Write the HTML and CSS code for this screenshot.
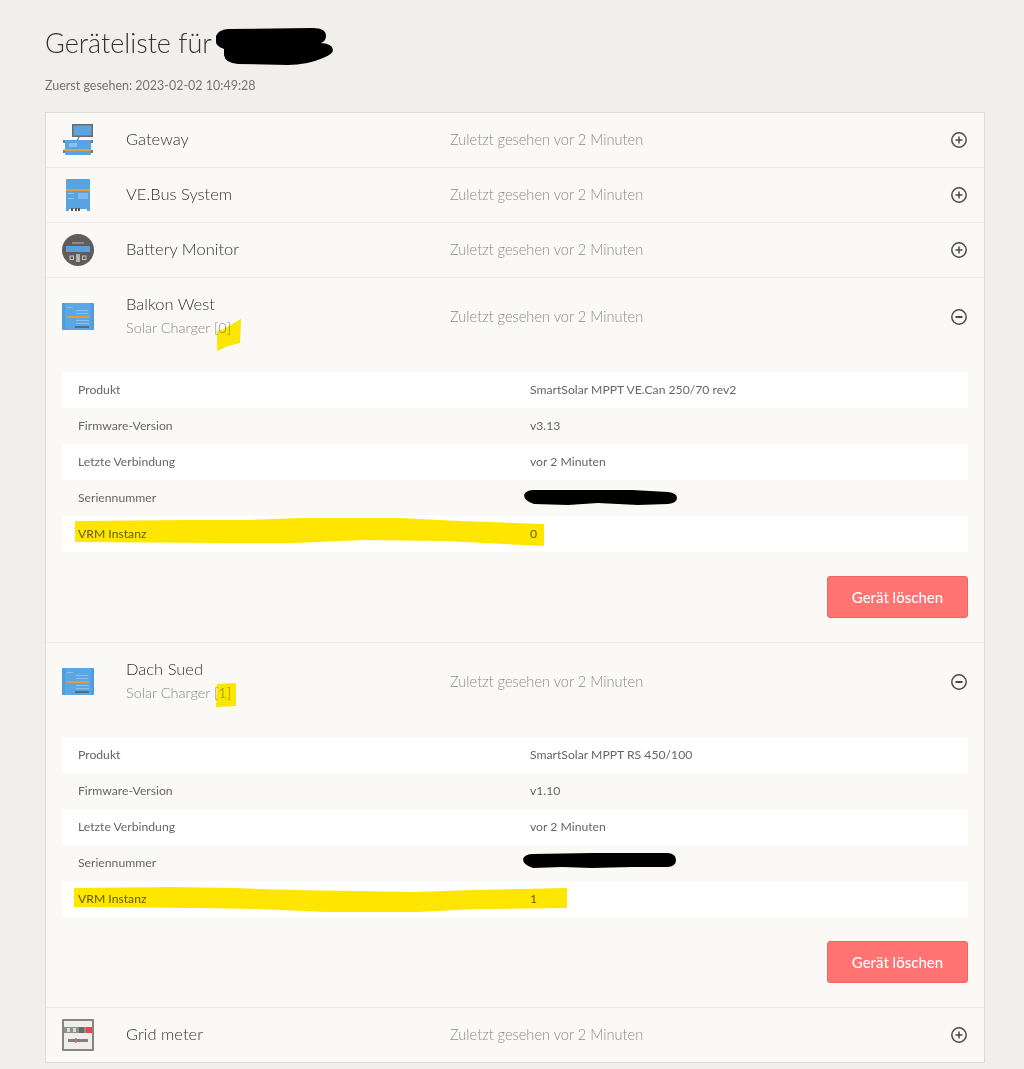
FILE: index.html
```html
<!DOCTYPE html>
<html lang="de">
<head>
    <meta charset="UTF-8">
    <title>Geräteliste</title>
    <link rel="stylesheet" href="styles.css">
</head>
<body>
<div class="page">
    <h1 class="title">Geräteliste für</h1>
    <p class="seen">Zuerst gesehen: 2023-02-02 10:49:28</p>

    <div class="panel">
        <div class="device">
            <div class="head">
                <svg class="icon" viewBox="0 0 32 32">
                    <rect x="10" y="0" width="21" height="13" fill="#6b6b6b"/>
                    <rect x="11.500" y="1.500" width="18" height="10" fill="#5aa5e0"/>
                    <path d="M17 13l-2 4" stroke="#888" stroke-width="1.500"/>
                    <rect x="1" y="16" width="30" height="3" fill="#777"/>
                    <rect x="1" y="26" width="30" height="3" fill="#777"/>
                    <rect x="3" y="16" width="26" height="15" rx="1" fill="#58a3e2"/>
                    <rect x="7" y="19" width="8" height="4" fill="#8cc0ea"/>
                    <rect x="3" y="25" width="26" height="2" fill="#e0a040"/>
                </svg>
                <div class="name">Gateway</div>
                <div class="status">Zuletzt gesehen vor 2 Minuten</div>
                <svg class="toggle" viewBox="0 0 16 16"><circle cx="8" cy="8" r="7.200"/><path d="M4.500 8h7M8 4.500v7"/></svg>
            </div>
        </div>
        <div class="device">
            <div class="head">
                <svg class="icon" viewBox="0 0 32 32">
                    <path d="M4 1q0-1 1-1h22q1 0 1 1v31h-3v-2h-18v2h-3z" fill="#58a3e2"/>
                    <rect x="4" y="10" width="24" height="2" fill="#ea9a35"/>
                    <rect x="16" y="14" width="10" height="6" fill="#83b9e8"/>
                    <rect x="6" y="14" width="6" height="1" fill="#9cc8ec"/>
                    <rect x="6" y="19" width="6" height="1" fill="#9cc8ec"/>
                    <rect x="9" y="29" width="2" height="3" fill="#555"/>
                    <rect x="13" y="29" width="2" height="3" fill="#555"/>
                    <rect x="16" y="29" width="2" height="3" fill="#555"/>
                </svg>
                <div class="name">VE.Bus System</div>
                <div class="status">Zuletzt gesehen vor 2 Minuten</div>
                <svg class="toggle" viewBox="0 0 16 16"><circle cx="8" cy="8" r="7.200"/><path d="M4.500 8h7M8 4.500v7"/></svg>
            </div>
        </div>
        <div class="device">
            <div class="head">
                <svg class="icon" viewBox="0 0 32 32">
                    <circle cx="16" cy="16" r="16" fill="#5f5c5a"/>
                    <rect x="4" y="12" width="24" height="6" fill="#5aa0e0"/>
                    <rect x="10" y="8" width="12" height="2" fill="#8c8a88"/>
                    <rect x="14" y="20" width="4" height="8" fill="#b5b3b0"/>
                    <rect x="8" y="22" width="3.500" height="3.500" fill="none" stroke="#c5c3c0"/>
                    <rect x="20.500" y="22" width="3.500" height="3.500" fill="none" stroke="#c5c3c0"/>
                </svg>
                <div class="name">Battery Monitor</div>
                <div class="status">Zuletzt gesehen vor 2 Minuten</div>
                <svg class="toggle" viewBox="0 0 16 16"><circle cx="8" cy="8" r="7.200"/><path d="M4.500 8h7M8 4.500v7"/></svg>
            </div>
        </div>

        <div class="device">
            <div class="head head-open">
                <svg class="icon" viewBox="0 0 32 32">
                    <rect x="0" y="2" width="32" height="27" rx="1" fill="#4f9ddc"/>
                    <rect x="3" y="2" width="26" height="27" fill="#5ba6e4"/>
                    <rect x="5" y="6" width="6" height="1" fill="#8fc0ea"/>
                    <rect x="14" y="9" width="12" height="1" fill="#8fc0ea"/>
                    <rect x="14" y="12" width="12" height="1" fill="#8fc0ea"/>
                    <rect x="5" y="15" width="22" height="2" fill="#ea9a35"/>
                    <rect x="14" y="19" width="13" height="1" fill="#8fc0ea"/>
                    <rect x="14" y="22" width="13" height="1" fill="#8fc0ea"/>
                    <rect x="13" y="25" width="14" height="2" fill="#5b6b7a"/>
                </svg>
                <div class="name">Balkon West<span class="type">Solar Charger [0]</span></div>
                <div class="status">Zuletzt gesehen vor 2 Minuten</div>
                <svg class="toggle" viewBox="0 0 16 16"><circle cx="8" cy="8" r="7.200"/><path class="minus" d="M4.500 8h7"/></svg>
            </div>
            <div class="details">
                <div class="line"><span>Produkt</span><span>SmartSolar MPPT VE.Can 250/70 rev2</span></div>
                <div class="line"><span>Firmware-Version</span><span>v3.13</span></div>
                <div class="line"><span>Letzte Verbindung</span><span>vor 2 Minuten</span></div>
                <div class="line"><span>Seriennummer</span><span></span></div>
                <div class="line"><span>VRM Instanz</span><span>0</span></div>
            </div>
            <div class="actions"><button class="btn-delete">Gerät löschen</button></div>
        </div>

        <div class="device">
            <div class="head head-open">
                <svg class="icon" viewBox="0 0 32 32">
                    <rect x="0" y="2" width="32" height="27" rx="1" fill="#4f9ddc"/>
                    <rect x="3" y="2" width="26" height="27" fill="#5ba6e4"/>
                    <rect x="5" y="6" width="6" height="1" fill="#8fc0ea"/>
                    <rect x="14" y="9" width="12" height="1" fill="#8fc0ea"/>
                    <rect x="14" y="12" width="12" height="1" fill="#8fc0ea"/>
                    <rect x="5" y="15" width="22" height="2" fill="#ea9a35"/>
                    <rect x="14" y="19" width="13" height="1" fill="#8fc0ea"/>
                    <rect x="14" y="22" width="13" height="1" fill="#8fc0ea"/>
                    <rect x="13" y="25" width="14" height="2" fill="#5b6b7a"/>
                </svg>
                <div class="name">Dach Sued<span class="type">Solar Charger [1]</span></div>
                <div class="status">Zuletzt gesehen vor 2 Minuten</div>
                <svg class="toggle" viewBox="0 0 16 16"><circle cx="8" cy="8" r="7.200"/><path class="minus" d="M4.500 8h7"/></svg>
            </div>
            <div class="details">
                <div class="line"><span>Produkt</span><span>SmartSolar MPPT RS 450/100</span></div>
                <div class="line"><span>Firmware-Version</span><span>v1.10</span></div>
                <div class="line"><span>Letzte Verbindung</span><span>vor 2 Minuten</span></div>
                <div class="line"><span>Seriennummer</span><span></span></div>
                <div class="line"><span>VRM Instanz</span><span>1</span></div>
            </div>
            <div class="actions"><button class="btn-delete">Gerät löschen</button></div>
        </div>

        <div class="device">
            <div class="head">
                <svg class="icon" viewBox="0 0 32 32">
                    <rect x="0" y="0" width="32" height="32" rx="1" fill="#858585"/>
                    <rect x="2" y="2" width="28" height="28" fill="#efeeea"/>
                    <rect x="2" y="8" width="28" height="6" fill="#8f8f8f"/>
                    <rect x="5" y="9" width="3" height="4" fill="#ddd"/>
                    <rect x="11" y="9" width="3" height="4" fill="#ddd"/>
                    <rect x="17" y="8" width="5" height="6" fill="#6a6a6a"/>
                    <rect x="24" y="8" width="6" height="6" fill="#e8484c"/>
                    <rect x="6" y="20" width="20" height="3" fill="#808080"/>
                    <rect x="13" y="19" width="1.500" height="5" fill="#d66"/>
                </svg>
                <div class="name">Grid meter</div>
                <div class="status">Zuletzt gesehen vor 2 Minuten</div>
                <svg class="toggle" viewBox="0 0 16 16"><circle cx="8" cy="8" r="7.200"/><path d="M4.500 8h7M8 4.500v7"/></svg>
            </div>
        </div>
    </div>
</div>

<!-- Filzstift auf dem Screenshot -->
<svg class="marks" viewBox="0 0 1024 1069">
    <path fill="#000" d="M216 36q2-6 12-7l85-1q13 0 13 8 0 5-5 7 12 1 12 7 0 4-10 8-16 7-35 7l-50-1q-13-1-14-9l0-6q-8-3-8-7z"/>
    <path fill="#000" d="M524 495q2-5 10-5l60 0 38 0 36 2q9 1 9 6t-9 6l-30 1-40-2-30 2-34-1q-10-3-10-9z"/>
    <path fill="#000" d="M523 859q2-5 10-5l60-1 40 0 35 0q8 1 8 7t-8 7l-36 0-40 1-30-1-29 1q-10-3-10-9z"/>
    <path fill="#ffe600" d="M75 521l115-1 60 0 50-2 100 0 60 3 84 3 0 22-40-2-60-3-80-1-70 3-70 0-149-1z"/>
    <path fill="#ffe600" d="M74 888l100-1 60 1 60 2 60 1 60 1 60-2 93-2 0 20-90 1-60 3-90 0-70-3-60-1-123-1z"/>
    <path fill="#ffec00" d="M217 331l5-1 19-11-1 24-12 3-11 5z"/>
    <path fill="#ffec00" d="M217 684l19-1 0 23-20 1z"/>
</svg>
</body>
</html>
```

FILE: styles.css
```css
*{
    box-sizing: border-box;
    margin: 0;
    padding: 0;
}
html,body{
    height: 1069px;
    overflow: hidden;
}
body{
    position: relative;
    background-color: #f0efeb;
    font-family: "Lato", "Liberation Sans", sans-serif;
    font-weight: 300;
    color: #3c3c3c;
}
.page{
    padding: 26px 39px 6px 45px;
}
.title{
    font-size: 27px;
    font-weight: 300;
    line-height: 34px;
    color: #333;
}
.seen{
    margin-top: 18px;
    font-size: 12.500px;
    line-height: 16px;
    font-weight: 400;
    color: #757575;
}
.panel{
    margin-top: 18px;
    background-color: #faf9f5;
    border: 1px solid #dddcd8;
}
.device{
    border-bottom: 1px solid #edece8;
}
.device:last-child{
    border-bottom: none;
}
.head{
    display: grid;
    grid-template-columns: 64px 324px 1fr 16px;
    align-items: center;
    height: 54px;
    padding: 0 17px 0 16px;
}
.head-open{
    height: 77px;
}
.icon{
    width: 32px;
    height: 32px;
}
.name{
    padding-bottom: 2px;
    font-size: 16.500px;
    line-height: 22px;
    color: #333;
}
.type{
    display: block;
    margin-top: 2px;
    font-size: 14.500px;
    color: #8a8a8a;
}
.status{
    padding-bottom: 2px;
    font-size: 14.600px;
    color: #8a8a8a;
}
.head-open .status{
    padding-bottom: 0;
}
.toggle{
    width: 16px;
    height: 16px;
    fill: none;
    stroke: #4a4a4a;
    stroke-width: 1.500;
}
.toggle .minus{
    stroke-width: 2;
}
.details{
    margin: 17px 16px 0;
    font-size: 12.200px;
    font-weight: 400;
    color: #666;
}
.line{
    display: grid;
    grid-template-columns: 452px 1fr;
    align-items: center;
    height: 36px;
    padding: 0 0 2px 16px;
}
.line:nth-child(odd){
    background-color: #fff;
}
.actions{
    display: flex;
    justify-content: flex-end;
    padding: 24px 16px 24px 0;
}
.btn-delete{
    width: 141px;
    height: 42px;
    background-color: #ff7373;
    border: 1px solid #f06464;
    border-radius: 3px;
    color: #fff;
    font-family: inherit;
    font-size: 15px;
    font-weight: 500;
}
.marks{
    position: absolute;
    top: 0;
    left: 0;
    width: 1024px;
    height: 1069px;
    mix-blend-mode: multiply;
    pointer-events: none;
}
```
